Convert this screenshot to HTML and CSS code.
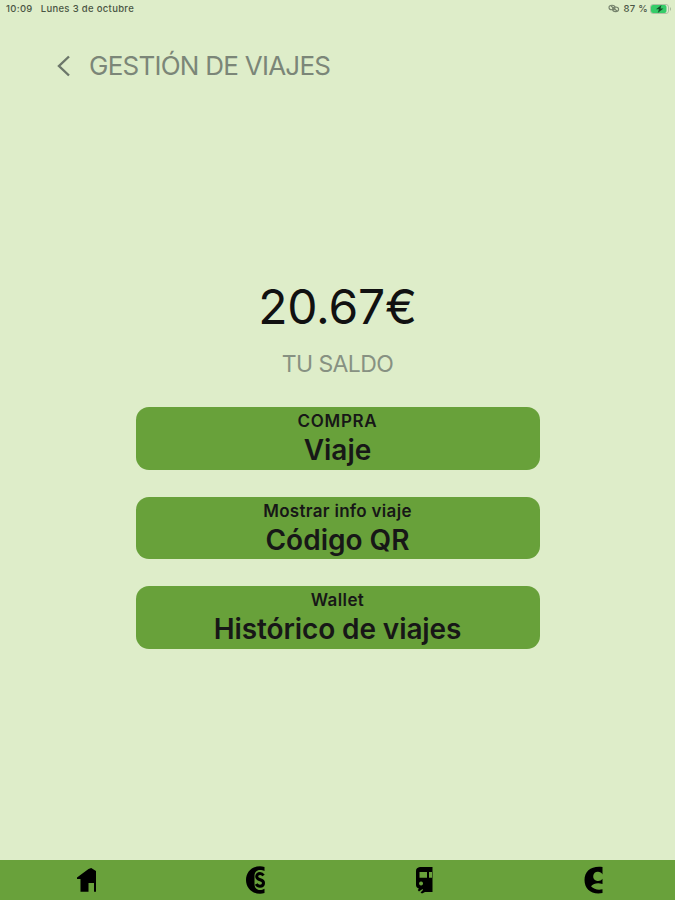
FILE: index.html
```html
<!DOCTYPE html>
<html lang="es">
<head>
<meta charset="utf-8">
<title>Gestión de viajes</title>
<link rel="stylesheet" href="styles.css">
</head>
<body>
<div class="status">
  <div class="status-left"><span class="time">10:09</span><span class="date">Lunes 3 de octubre</span></div>
  <div class="status-right">
    <svg class="link" width="12" height="9" viewBox="0 0 12 9"><g fill="none" stroke="#75826c" stroke-width="1.1"><ellipse cx="4" cy="3.5" rx="3" ry="2.3"/><ellipse cx="7.6" cy="5.3" rx="3" ry="2.3"/><path d="M3 2l6 5"/></g></svg>
    <span class="percent">87 %</span>
    <svg width="22" height="10" viewBox="0 0 22 10"><rect x=".5" y=".5" width="18" height="9" rx="2.5" fill="#e4efd4" stroke="#a4b599" stroke-width=".8"/><rect x="1" y="1" width="15.5" height="8" rx="2" fill="#35cc68"/><path d="M11.5 1L6 5.3h3L7.7 9l5.8-4.5h-3z" fill="#174d29"/><path d="M20 3q2 2 0 4" fill="#a4b599"/></svg>
  </div>
</div>
<header class="header">
  <svg class="back" width="14" height="22" viewBox="0 0 14 22"><path d="M12 1.5L2 11l10 9.5" fill="none" stroke="#6c776a" stroke-width="2.4"/></svg>
  <h1 class="title">GESTIÓN DE VIAJES</h1>
</header>
<main class="main">
  <div class="amount">20.67€</div>
  <div class="caption">TU SALDO</div>
  <div class="actions">
    <button class="action"><span class="small buy">COMPRA</span><span class="big trip">Viaje</span></button>
    <button class="action"><span class="small info">Mostrar info viaje</span><span class="big code">Código QR</span></button>
    <button class="action"><span class="small wallet">Wallet</span><span class="big history">Histórico de viajes</span></button>
  </div>
</main>
<nav class="nav">
  <a class="tab"><svg width="28" height="30" viewBox="0 0 28 30"><path d="M3 12.500L14.500 4 17.200 3 22 6v20.800h-2V18h-5.500v8.800H6.500V14H3z"/></svg></a>
  <a class="tab"><svg width="28" height="30" viewBox="0 0 28 30"><path d="M21.500 2v4C20 5.200 18.700 5 17 5c-3.500 0-5.500 2.500-5.500 6v8c0 3.500 2 6 5.500 6 1.700 0 3-.4 4.500-1.200V28c-1.500.5-3 .7-4.500.7C8.500 28.700 3 22.500 3 15S8.500 1.300 17 1.300c1.500 0 3 .2 4.500.7z"/><path d="M20.500 10.500C19.500 9 18.500 8.500 17 8.500c-2 0-3.300 1.200-3.300 3 0 2 1.600 2.700 3.500 3.300 2 .6 3.300 1.400 3.300 3.200 0 2-1.500 3.200-3.500 3.200-1.700 0-2.900-.6-3.800-2.200" fill="none" stroke="#000" stroke-width="3"/></svg></a>
  <a class="tab"><svg class="bus" width="28" height="30" viewBox="0 0 28 30"><path fill-rule="evenodd" d="M7 2h12.500v25H12l-3 1.500-1.500-1L10 25l-.5-1L6 26.500 4.700 25 6 23.700c-2-.7-3-1.700-3-3.700V6c0-2.500 1.500-3.700 4-4zM6.500 7v5.700h7.500V7zM16 7v5.700h3V7zM8 16.500a2 2 0 1 0 .1 0z"/></svg></a>
  <a class="tab"><svg class="profile" width="28" height="30" viewBox="0 0 28 30"><path fill-rule="evenodd" d="M21.500 2v7.500C20.500 7.700 19 6.700 17 6.700a4.600 4.600 0 0 0-1.500 9c2.500.7 4.500-.2 6-2V19c-5-1.500-9-.5-11.500 2.300 3 3 7 4.200 11.500 3V28C10.500 30 3.500 24 3.500 15S10.500.5 21.500 2z"/></svg></a>
</nav>
</body>
</html>
```
FILE: styles.css
```css
* { box-sizing: border-box; }
body {
  margin: 0;
  height: 900px;
  display: flex;
  flex-direction: column;
  overflow: hidden;
  background: #deedc9;
  color: #111;
  font-family: Inter, "Liberation Sans", sans-serif;
}
.status {
  height: 17px;
  padding: 0 3px 0 6px;
  display: flex;
  justify-content: space-between;
  align-items: center;
  font-size: 9.5px;
  font-weight: 500;
  color: #4a5544;
}
.status-left, .status-right { display: flex; align-items: center; }
.status-left { letter-spacing: 0.32px; }
.date { margin-left: 8px; }
.percent { margin: 0 2px 0 3px; letter-spacing: 0.3px; }
.header { height: 97px; padding: 0 0 0 57px; display: flex; align-items: center; }
.back { margin-right: 18px; }
.title { margin: 0; font-size: 26px; font-weight: 400; letter-spacing: -0.75px; color: #7b8678; white-space: nowrap; }
.main { flex: 1; padding-top: 159px; display: flex; flex-direction: column; align-items: center; }
.amount { height: 68px; font-size: 48px; line-height: 68px; font-weight: 400; letter-spacing: -0.2px; }
.caption { height: 44px; font-size: 23px; line-height: 46px; font-weight: 400; letter-spacing: -0.6px; color: #879182; }
.actions { width: 404px; margin-top: 22px; display: flex; flex-direction: column; gap: 27px; }
.action {
  width: 100%;
  height: 62.7px;
  padding: 0;
  border: 0;
  border-radius: 13px;
  background: #68a13a;
  color: #171717;
  font-family: inherit;
  display: flex;
  flex-direction: column;
  align-items: center;
}
.small { height: 29px; font-size: 17px; line-height: 29px; font-weight: 600; letter-spacing: 0.3px; }
.buy { letter-spacing: 0.7px; }
.wallet { letter-spacing: 0.4px; }
.big { height: 29px; font-size: 28px; line-height: 29px; font-weight: 600; }
.history { letter-spacing: -0.1px; }
.nav { height: 40px; flex: none; background: #69a13b; display: flex; }
.tab { flex: 1; padding: 5px 0 0 7px; display: flex; justify-content: center; }
.bus { margin-left: 4px; }
.profile { margin-left: 1px; }
```
